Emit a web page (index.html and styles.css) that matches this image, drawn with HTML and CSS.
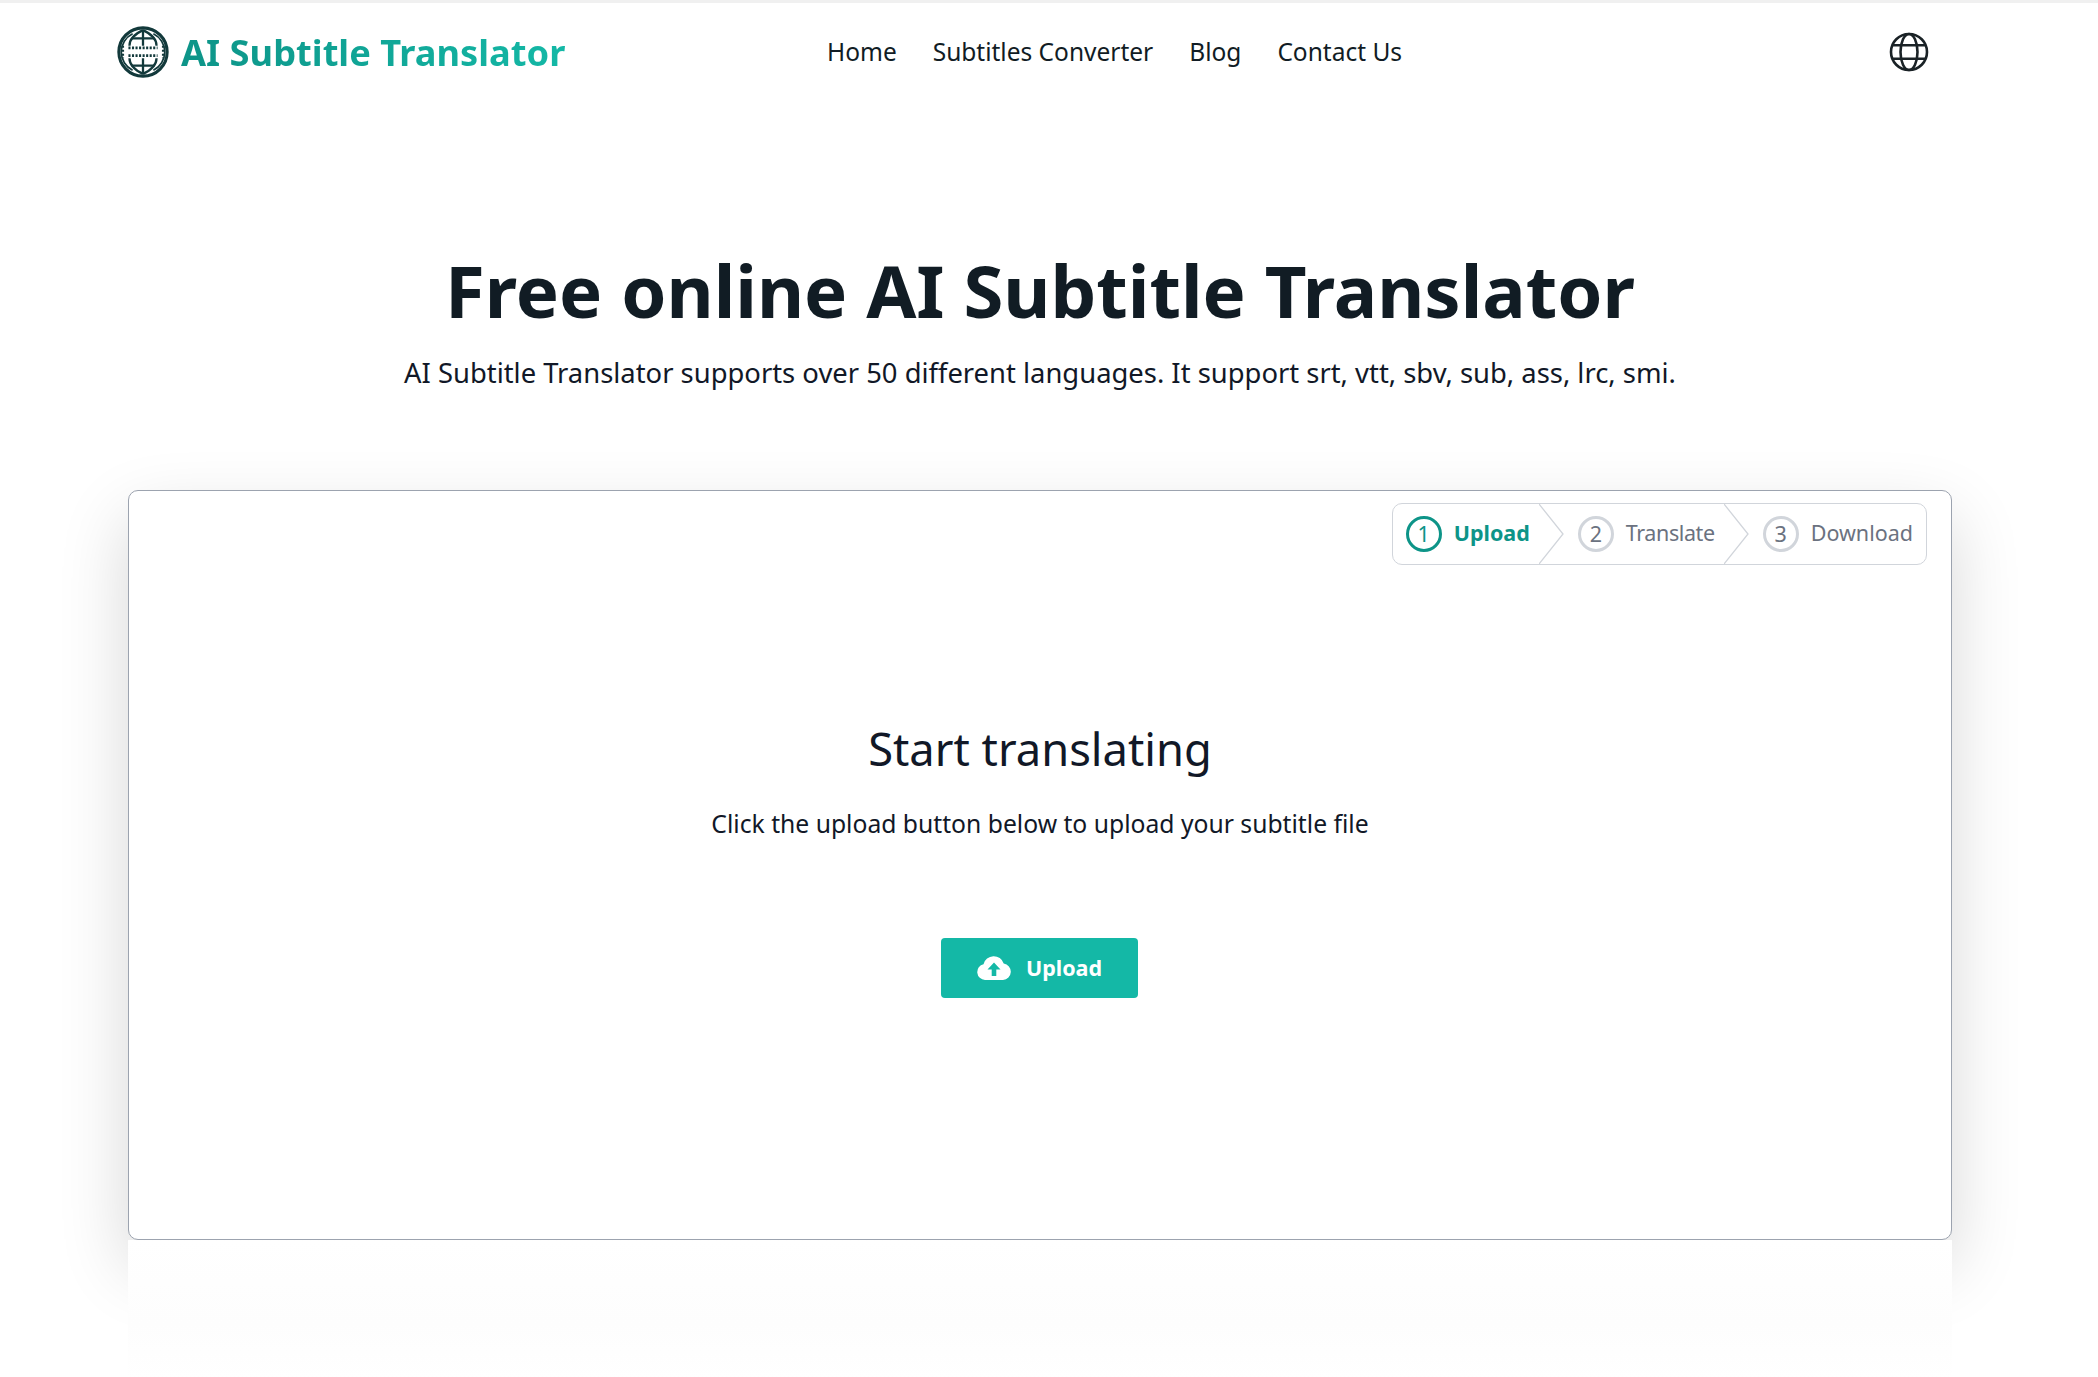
FILE: index.html
```html
<!DOCTYPE html>
<html lang="en">
<head>
    <meta charset="UTF-8">
    <meta name="viewport" content="width=device-width, initial-scale=1.0">
    <title>AI Subtitle Translator</title>
    <link rel="stylesheet" href="styles.css">
</head>
<body>
    <header class="topbar">
        <a class="brand" href="#">
            <svg class="brand-logo" viewBox="0 0 50 50" fill="none" stroke="#12393b">
                <circle cx="25" cy="25" r="23.200" stroke-width="3"/>
                <path d="M15 7.500A19.500 19.500 0 0 0 15 42.500M35 7.500A19.500 19.500 0 0 1 35 42.500" stroke-width="1.600"/>
                <path d="M25 4C12 10 12 17 12 19M25 4C38 10 38 17 38 19M25 46C12 40 12 33 12 31M25 46C38 40 38 33 38 31" stroke-width="2.200"/>
                <path d="M25 4v15M25 31v15M14 12h22M14 38h22" stroke-width="2.200"/>
                <path d="M11 21h28M11 28.500h28" stroke-width="2.600" stroke-dasharray="2 1.400"/>
                <path d="M5.500 19v12M44.500 19v12" stroke-width="2.600" stroke-dasharray="2 1.800"/>
            </svg>
            <span class="brand-name">AI Subtitle Translator</span>
        </a>
        <nav class="nav">
            <a href="#">Home</a>
            <a href="#">Subtitles Converter</a>
            <a href="#">Blog</a>
            <a href="#">Contact Us</a>
        </nav>
        <svg class="lang-icon" viewBox="0 0 40 40" fill="none" stroke="#1a2226" stroke-width="2.600">
            <circle cx="20" cy="20" r="18"/>
            <ellipse cx="20" cy="20" rx="8.500" ry="18"/>
            <path d="M3.500 13.300h33M3.500 26.700h33"/>
        </svg>
    </header>

    <section class="hero">
        <h1>Free online AI Subtitle Translator</h1>
        <p>AI Subtitle Translator supports over 50 different languages. It support srt, vtt, sbv, sub, ass, lrc, smi.</p>
    </section>

    <main class="card">
        <div class="steps-row">
            <ol class="steps">
                <li class="step active"><span class="step-num">1</span><span class="step-label">Upload</span></li>
                <li class="sep"><svg viewBox="0 0 25 60" fill="#fff" stroke="#d1d5db" stroke-width="1.300"><path d="M0 0L24 30L0 60"/></svg></li>
                <li class="step"><span class="step-num">2</span><span class="step-label tight">Translate</span></li>
                <li class="sep"><svg viewBox="0 0 25 60" fill="#fff" stroke="#d1d5db" stroke-width="1.300"><path d="M0 0L24 30L0 60"/></svg></li>
                <li class="step"><span class="step-num">3</span><span class="step-label">Download</span></li>
            </ol>
        </div>
        <div class="start">
            <h2>Start translating</h2>
            <p>Click the upload button below to upload your subtitle file</p>
            <button class="upload-btn" type="button">
                <svg class="cloud" viewBox="0 0 34 24"><path fill="#fff" fill-rule="evenodd" d="M8 24a8 8 0 0 1-1.500-15.800A10.500 10.500 0 0 1 26.700 7.500 8.300 8.300 0 0 1 26 24zM17 6.500l-6.500 7h4.200V20h4.600v-6.500h4.200z"/></svg>
                Upload
            </button>
        </div>
    </main>
    <div class="below"></div>
</body>
</html>
```

FILE: styles.css
```css
* {
    box-sizing: border-box;
}

html, body {
    margin: 0;
    height: 100%;
}

body {
    font-family: "Noto Sans", "Open Sans", sans-serif;
    color: #111827;
    background-color: #fff;
    border-top: 3px solid #f0f0f0;
    overflow: hidden;
}

.topbar {
    display: flex;
    align-items: center;
    height: 98px;
    padding: 0 169px 0 117px;
}

.brand {
    display: flex;
    align-items: center;
    gap: 12px;
    width: 710px;
    text-decoration: none;
}

.brand-logo {
    width: 52px;
    height: 52px;
}

.brand-name {
    font-size: 36.250px;
    font-weight: 700;
    white-space: nowrap;
    background: linear-gradient(90deg, #0d9488, #14b8a6);
    -webkit-background-clip: text;
    background-clip: text;
    color: transparent;
}

.nav {
    display: flex;
    gap: 36px;
    padding-bottom: 2px;
    font-size: 24.500px;
}

.nav a {
    color: #111c24;
    text-decoration: none;
}

.lang-icon {
    width: 40px;
    height: 40px;
    margin-left: auto;
}

.hero {
    margin: 0 146px 0 128px;
    padding-top: 144px;
    text-align: center;
}

.hero h1 {
    margin: 0;
    font-size: 72.500px;
    line-height: 90px;
    font-weight: 700;
    color: #111c24;
}

.hero p {
    margin: 18px 0 0;
    font-size: 27.400px;
    line-height: 40px;
}

.card {
    position: relative;
    margin: 97px 146px 0 128px;
    height: 750px;
    background-color: #fff;
    border: 1.500px solid #9ca3af;
    border-radius: 10px;
    box-shadow: 0 28px 70px rgba(0, 0, 0, 0.16);
    padding-top: 12px;
}

.steps-row {
    display: flex;
    justify-content: flex-end;
    padding-right: 24px;
}

.steps {
    display: flex;
    align-items: center;
    height: 62px;
    margin: 0;
    padding: 0;
    list-style: none;
    border: 1.500px solid #d1d5db;
    border-radius: 10px;
    font-size: 21.500px;
    color: #6b7280;
}

.step {
    display: flex;
    align-items: center;
    gap: 12px;
    padding: 0 9px 0 14px;
}

.step:first-child {
    padding-left: 13px;
}

.step:last-child {
    padding-right: 13px;
}

.step-label {
    padding-bottom: 3px;
}

.tight {
    letter-spacing: -0.4px;
}

.step.active {
    color: #0d9488;
    font-weight: 700;
}

.step-num {
    display: flex;
    align-items: center;
    justify-content: center;
    width: 36px;
    height: 36px;
    padding-bottom: 2px;
    border: 3px solid #d1d5db;
    border-radius: 50%;
    font-weight: 400;
}

.active .step-num {
    border-color: #0d9488;
}

.sep {
    height: 60px;
}

.sep svg {
    display: block;
    width: 25px;
    height: 60px;
}

.start {
    display: flex;
    flex-direction: column;
    align-items: center;
    padding-top: 152px;
}

.start h2 {
    margin: 0;
    font-size: 45.300px;
    line-height: 64px;
    font-weight: 400;
}

.start p {
    margin: 25px 0 0;
    font-size: 24.700px;
    line-height: 36px;
}

.upload-btn {
    display: flex;
    align-items: center;
    gap: 15px;
    margin: 96px 1px 0 0;
    width: 197px;
    height: 60px;
    justify-content: center;
    padding-bottom: 2px;
    background-color: #14b8a6;
    color: #fff;
    border: none;
    border-radius: 4px;
    font-family: inherit;
    font-size: 21.500px;
    font-weight: 700;
}

.cloud {
    width: 34px;
    height: 24px;
}

/* next section sits over the card shadow */
.below {
    position: relative;
    margin: 0 146px 0 128px;
    height: 140px;
    background: linear-gradient(#fff, #fdfdfd 60%, #fff);
}
```
